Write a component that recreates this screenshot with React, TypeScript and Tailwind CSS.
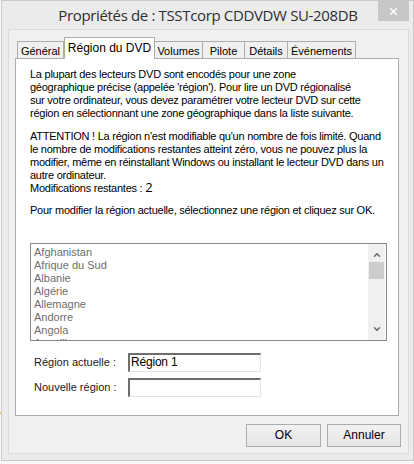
import { ChevronUp, ChevronDown, X } from 'lucide-react'

const tabs = [
  { label: 'Général', w: 'w-[47px]', active: false },
  { label: 'Région du DVD', w: 'w-[91px]', active: true },
  { label: 'Volumes', w: 'w-[49px]', active: false },
  { label: 'Pilote', w: 'w-[43px]', active: false },
  { label: 'Détails', w: 'w-[44px]', active: false },
  { label: 'Événements', w: 'w-[69px]', active: false },
]

const countries = ['Afghanistan', 'Afrique du Sud', 'Albanie', 'Algérie', 'Allemagne', 'Andorre', 'Angola', 'Anguilla']

const App = () => {
  return (
    <div className="w-[414px] h-[464px] bg-[#f7f7f7] flex font-['Liberation_Sans',Arial,sans-serif] text-[11px] leading-[13px] text-black">
      <div className="w-[1px] flex flex-col">
        <div className="h-[412px]" />
        <div className="h-[2px] bg-[#f5c04a]" />
      </div>
      <div className="w-[413px] h-[461px] border border-[#c9c9c9] bg-[#ebebeb] flex flex-col">
        {/* title bar */}
        <div className="h-[28px] flex items-start">
          <div className="w-[36px]" />
          <div className="flex-1 text-center pt-[4px] font-['Open_Sans',sans-serif] text-[15px] leading-[20px] text-[#2e2e2e] tracking-[-0.35px]">
            Propriétés de : TSSTcorp CDDVDW SU-208DB
          </div>
          <div className="w-[31px] h-[20px] mr-[4px] bg-[#c7c7c7] flex items-center justify-center">
            <X size={11} strokeWidth={3} color="#ffffff" />
          </div>
        </div>

        {/* dialog body */}
        <div className="ml-[6px] mr-[4px] h-[425px] border border-[#dcdcdc] bg-[#f0f0f0] flex flex-col pt-[7px] pl-[6px] pr-[9px]">
          {/* tabs */}
          <div className="h-[21px] flex items-end pl-[2px]">
            {tabs.map((t) =>
              t.active ? (
                <div key={t.label} className={`${t.w} h-[22px] -mb-px relative z-10 bg-white border border-b-0 border-[#acacac] flex items-start justify-center pt-[3px] text-[12px] leading-[14px]`}>
                  {t.label}
                </div>
              ) : (
                <div key={t.label} className={`${t.w} h-[17px] -ml-px first:ml-0 bg-[#f0f0f0] border border-b-0 border-[#acacac] flex items-center justify-center pt-[2px]`}>
                  {t.label}
                </div>
              ),
            )}
          </div>

          {/* tab page */}
          <div className="h-[358px] bg-white border border-[#acacac] pt-[9px] pl-[14px] pr-[8px] whitespace-nowrap tracking-[-0.25px]">
            <p>
              La plupart des lecteurs DVD sont encodés pour une zone
              <br />
              géographique précise (appelée 'région'). Pour lire un DVD régionalisé
              <br />
              sur votre ordinateur, vous devez paramétrer votre lecteur DVD sur cette
              <br />
              région en sélectionnant une zone géographique dans la liste suivante.
            </p>
            <p className="mt-[10px]">
              ATTENTION ! La région n'est modifiable qu'un nombre de fois limité. Quand
              <br />
              le nombre de modifications restantes atteint zéro, vous ne pouvez plus la
              <br />
              modifier, même en réinstallant Windows ou installant le lecteur DVD dans un
              <br />
              autre ordinateur.
            </p>
            <p className="-mt-px">
              Modifications restantes : <span className="font-['Open_Sans',sans-serif] text-[13px] leading-[13px] tracking-normal">2</span>
            </p>
            <p className="mt-[9px]">Pour modifier la région actuelle, sélectionnez une région et cliquez sur OK.</p>

            {/* listbox */}
            <div className="mt-[26px] w-[357px] h-[98px] border border-[#828790] flex tracking-normal">
              <div className="flex-1 overflow-hidden pt-[2px] pl-[3px] text-[#6d6d6d]">
                {countries.map((c) => (
                  <div key={c}>{c}</div>
                ))}
              </div>
              <div className="w-[17px] mr-[1px] bg-[#f0f0f0] flex flex-col items-center">
                <div className="h-[18px] flex items-center justify-center pt-[4px]">
                  <ChevronUp size={10} strokeWidth={3} color="#606060" />
                </div>
                <div className="w-[15px] h-[17px] bg-[#cdcdcd]" />
                <div className="flex-1" />
                <div className="h-[18px] flex items-center justify-center pb-[4px]">
                  <ChevronDown size={10} strokeWidth={3} color="#606060" />
                </div>
              </div>
            </div>

            {/* fields */}
            <div className="mt-[12px] flex flex-col gap-[6px] pl-[4px] tracking-normal">
              <div className="flex items-center">
                <div className="w-[94px] text-[#1a1a1a]">Région actuelle :</div>
                <div className="w-[133px] h-[19px] border-2 border-[#6e6e6e] border-r-[#e3e3e3] border-b-[#e3e3e3] border-r border-b text-[12px] leading-[15px] pl-[1px] tracking-[-0.2px]">
                  Région 1
                </div>
              </div>
              <div className="flex items-center">
                <div className="w-[94px] text-[#1a1a1a]">Nouvelle région :</div>
                <div className="w-[133px] h-[19px] border-2 border-[#6e6e6e] border-r-[#e3e3e3] border-b-[#e3e3e3] border-r border-b" />
              </div>
            </div>
          </div>

          {/* buttons */}
          <div className="mt-[8px] -mr-[2px] flex justify-end gap-[6px]">
            <button className="w-[75px] h-[23px] border border-[#acacac] bg-gradient-to-b from-[#f2f2f2] to-[#e5e5e5] text-[12px] text-black">
              OK
            </button>
            <button className="w-[74px] h-[23px] border border-[#acacac] bg-gradient-to-b from-[#f2f2f2] to-[#e5e5e5] text-[12px] text-black">
              Annuler
            </button>
          </div>
        </div>
      </div>
    </div>
  )
}

export default App
